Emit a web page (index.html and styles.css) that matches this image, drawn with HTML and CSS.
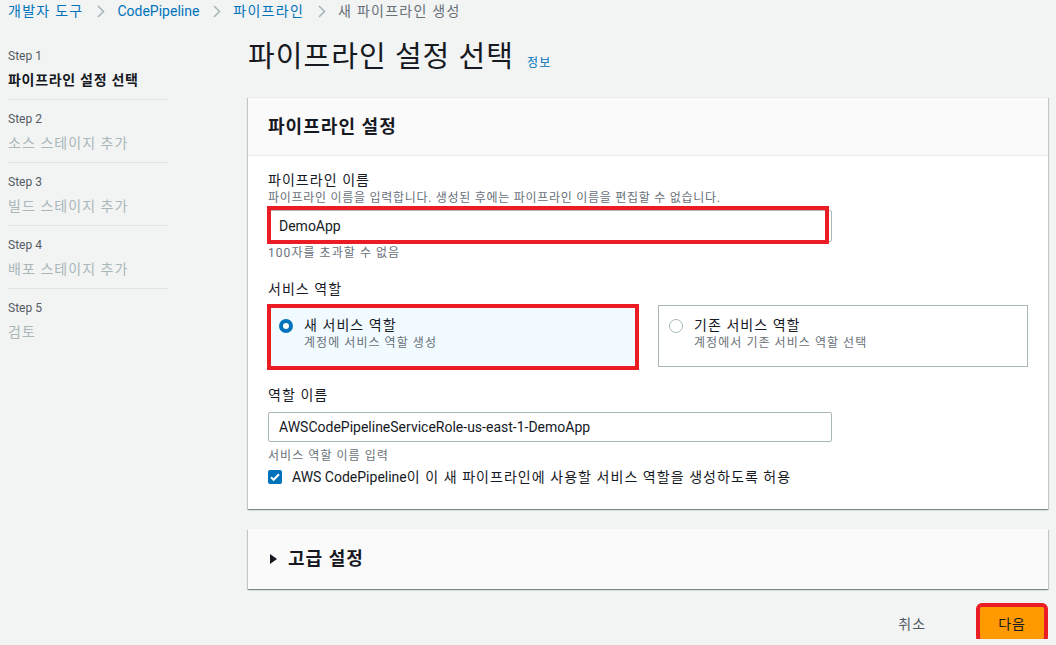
FILE: index.html
```html
<!DOCTYPE html>
<html lang="ko">
<head>
  <meta charset="UTF-8">
  <meta name="viewport" content="width=device-width, initial-scale=1.0">
  <title>파이프라인 설정 선택</title>
  <link rel="stylesheet" href="styles.css">
</head>
<body>
  <nav class="crumbs">
    <a href="#">개발자 도구</a>
    <svg class="chev" width="8" height="13" viewBox="0 0 8 13"><path d="M1 1l5.5 5.5L1 12" fill="none" stroke="#aab7b8" stroke-width="1.6"/></svg>
    <a href="#" class="latin">CodePipeline</a>
    <svg class="chev" width="8" height="13" viewBox="0 0 8 13"><path d="M1 1l5.5 5.5L1 12" fill="none" stroke="#aab7b8" stroke-width="1.6"/></svg>
    <a href="#">파이프라인</a>
    <svg class="chev" width="8" height="13" viewBox="0 0 8 13"><path d="M1 1l5.5 5.5L1 12" fill="none" stroke="#aab7b8" stroke-width="1.6"/></svg>
    <span class="current">새 파이프라인 생성</span>
  </nav>

  <div class="layout">
    <ul class="steps">
      <li class="step active">
        <span class="step-num">Step 1</span>
        <span class="step-name">파이프라인 설정 선택</span>
      </li>
      <li class="step">
        <span class="step-num">Step 2</span>
        <span class="step-name">소스 스테이지 추가</span>
      </li>
      <li class="step">
        <span class="step-num">Step 3</span>
        <span class="step-name">빌드 스테이지 추가</span>
      </li>
      <li class="step">
        <span class="step-num">Step 4</span>
        <span class="step-name">배포 스테이지 추가</span>
      </li>
      <li class="step">
        <span class="step-num">Step 5</span>
        <span class="step-name">검토</span>
      </li>
    </ul>

    <main class="main">
      <div class="page-head">
        <h1 class="page-title">파이프라인 설정 선택</h1>
        <a href="#" class="info">정보</a>
      </div>

      <section class="card">
        <div class="card-head">
          <h2>파이프라인 설정</h2>
        </div>
        <div class="card-body">
          <div class="field">
            <label class="label">파이프라인 이름</label>
            <p class="desc">파이프라인 이름을 입력합니다. 생성된 후에는 파이프라인 이름을 편집할 수 없습니다.</p>
            <div class="input-wrap marked">
              <input class="input" type="text" value="DemoApp">
            </div>
            <p class="hint">100자를 초과할 수 없음</p>
          </div>

          <div class="field">
            <label class="label">서비스 역할</label>
            <div class="tiles">
              <div class="tile selected">
                <span class="radio on"></span>
                <div>
                  <div class="tile-title">새 서비스 역할</div>
                  <div class="tile-desc">계정에 서비스 역할 생성</div>
                </div>
              </div>
              <div class="tile">
                <span class="radio"></span>
                <div>
                  <div class="tile-title">기존 서비스 역할</div>
                  <div class="tile-desc">계정에서 기존 서비스 역할 선택</div>
                </div>
              </div>
            </div>
          </div>

          <div class="field">
            <label class="label">역할 이름</label>
            <input class="input short" type="text" value="AWSCodePipelineServiceRole-us-east-1-DemoApp">
            <p class="hint role-hint">서비스 역할 이름 입력</p>
            <div class="check-row">
              <span class="checkbox">
                <svg width="14" height="14" viewBox="0 0 14 14"><path d="M3 7.2l2.6 2.6L11 4.2" fill="none" stroke="#fff" stroke-width="2"/></svg>
              </span>
              <span><span class="latin">AWS CodePipeline</span>이 이 새 파이프라인에 사용할 서비스 역할을 생성하도록 허용</span>
            </div>
          </div>
        </div>
      </section>

      <section class="card collapsed">
        <div class="card-head">
          <h2><span class="caret"></span>고급 설정</h2>
        </div>
      </section>

      <div class="actions">
        <button class="btn-link">취소</button>
        <button class="btn-primary">다음</button>
      </div>
    </main>
  </div>
</body>
</html>
```

FILE: styles.css
```css
body {
  margin: 0;
  background-color: #f2f3f3;
  color: #16191f;
  font-family: Roboto, "Noto Sans CJK KR", sans-serif;
  font-size: 14px;
  line-height: 20px;
  letter-spacing: 0.075em;
}

p {
  margin: 0;
}

.latin {
  letter-spacing: 0;
}

.crumbs {
  display: flex;
  align-items: center;
  height: 22px;
  padding-left: 8px;
  font-size: 14px;
  letter-spacing: 0.09em;
}

.crumbs a {
  color: #0073bb;
  text-decoration: none;
}

.crumbs .current {
  color: #687078;
}

.crumbs .chev {
  margin: 0 12px 0 14px;
}

.layout {
  display: flex;
  padding: 15px 8px 0 8px;
}

.steps {
  list-style: none;
  margin: 0;
  padding: 0;
  width: 160px;
  flex-shrink: 0;
}

.step {
  display: flex;
  flex-direction: column;
  padding: 11px 0 9px 0;
  border-bottom: 1px solid #e1e4e5;
}

.step:last-child {
  border-bottom: none;
}

.step-num {
  font-size: 12px;
  line-height: 16px;
  color: #545b64;
  letter-spacing: 0;
}

.step-name {
  margin-top: 6px;
  color: #aab7b8;
}

.step.active .step-name {
  color: #16191f;
  font-weight: 700;
  letter-spacing: 0.05em;
}

.main {
  margin-left: 80px;
  width: 800px;
}

.page-head {
  display: flex;
  align-items: baseline;
  height: 40px;
  margin-bottom: 20px;
}

.page-title {
  margin: 0;
  font-size: 29px;
  line-height: 40px;
  font-weight: 400;
}

.info {
  font-size: 12px;
  line-height: 16px;
  color: #0073bb;
  text-decoration: none;
  margin-left: 13px;
}

.card {
  background-color: #fff;
  box-shadow: 0 1px 1px 0 rgba(0, 28, 36, 0.3), 1px 1px 1px 0 rgba(0, 28, 36, 0.15), -1px 1px 1px 0 rgba(0, 28, 36, 0.15);
  border-top: 1px solid #eaeded;
}

.card-head {
  background-color: #fafafa;
  border-bottom: 1px solid #eaeded;
  padding: 0 20px;
  height: 57px;
  display: flex;
  align-items: center;
}

.card-head h2 {
  margin: 0;
  font-size: 18px;
  font-weight: 700;
  line-height: 24px;
  display: flex;
  align-items: center;
}

.card-body {
  padding: 14px 20px 22px 20px;
}

.field + .field {
  margin-top: 18px;
}

.label {
  display: block;
}

.desc,
.hint,
.tile-desc {
  font-size: 12px;
  line-height: 16px;
  color: #687078;
}

.desc {
  letter-spacing: 0.06em;
}

.hint {
  margin-top: 3px;
}

.role-hint {
  margin-top: 6px;
}

.input-wrap {
  position: relative;
  margin-top: 4px;
}

.input {
  display: block;
  box-sizing: border-box;
  width: 564px;
  height: 32px;
  padding: 0 10px;
  border: 1px solid #aab7b8;
  border-radius: 2px;
  background: #fff;
  font-family: Roboto, "Noto Sans CJK KR", sans-serif;
  font-size: 14px;
  color: #16191f;
}

.input.short {
  margin-top: 7px;
  height: 30px;
}

.marked::after {
  content: "";
  position: absolute;
  left: -1px;
  top: -4px;
  width: 554px;
  height: 30px;
  border: 4px solid #ec1c24;
}

.tiles {
  display: grid;
  grid-template-columns: 1fr 1fr;
  gap: 20px;
  margin-top: 6px;
}

.tile {
  display: flex;
  align-items: flex-start;
  gap: 11px;
  height: 62px;
  box-sizing: border-box;
  padding: 9px 10px;
  border: 1px solid #aab7b8;
  background: #fff;
}

.tile.selected {
  position: relative;
  background: #f1faff;
  border-color: #0073bb;
}

.tile.selected::after {
  content: "";
  position: absolute;
  left: -2px;
  top: -2px;
  right: -2px;
  bottom: -4px;
  border: 4px solid #ec1c24;
}

.radio {
  flex-shrink: 0;
  box-sizing: border-box;
  width: 14px;
  height: 14px;
  margin-top: 4px;
  border-radius: 50%;
  border: 1px solid #aab7b8;
  background: #fff;
}

.radio.on {
  border: 4.5px solid #0073bb;
}

.check-row {
  display: flex;
  align-items: center;
  gap: 10px;
  margin-top: 3px;
}

.checkbox {
  display: flex;
  width: 14px;
  height: 14px;
  border-radius: 2px;
  background: #0073bb;
}

.collapsed {
  margin-top: 20px;
  border-top: none;
}

.collapsed .card-head {
  border-bottom: none;
  height: 60px;
  padding-left: 22px;
}

.caret {
  width: 0;
  height: 0;
  border-top: 5px solid transparent;
  border-bottom: 5px solid transparent;
  border-left: 7px solid #16191f;
  margin-right: 11px;
}

.actions {
  display: flex;
  justify-content: flex-end;
  align-items: center;
  margin-top: 18px;
  padding-right: 4px;
}

.btn-link {
  background: none;
  border: none;
  padding: 4px 20px;
  margin-right: 34px;
  font-family: Roboto, "Noto Sans CJK KR", sans-serif;
  font-size: 14px;
  letter-spacing: 0.075em;
  color: #545b64;
}

.btn-primary {
  height: 32px;
  padding: 0 18px;
  border: none;
  border-radius: 2px;
  background: #ff9900;
  outline: 4px solid #ec1c24;
  font-family: Roboto, "Noto Sans CJK KR", sans-serif;
  font-size: 14px;
  letter-spacing: 0.075em;
  color: #16191f;
}
```
